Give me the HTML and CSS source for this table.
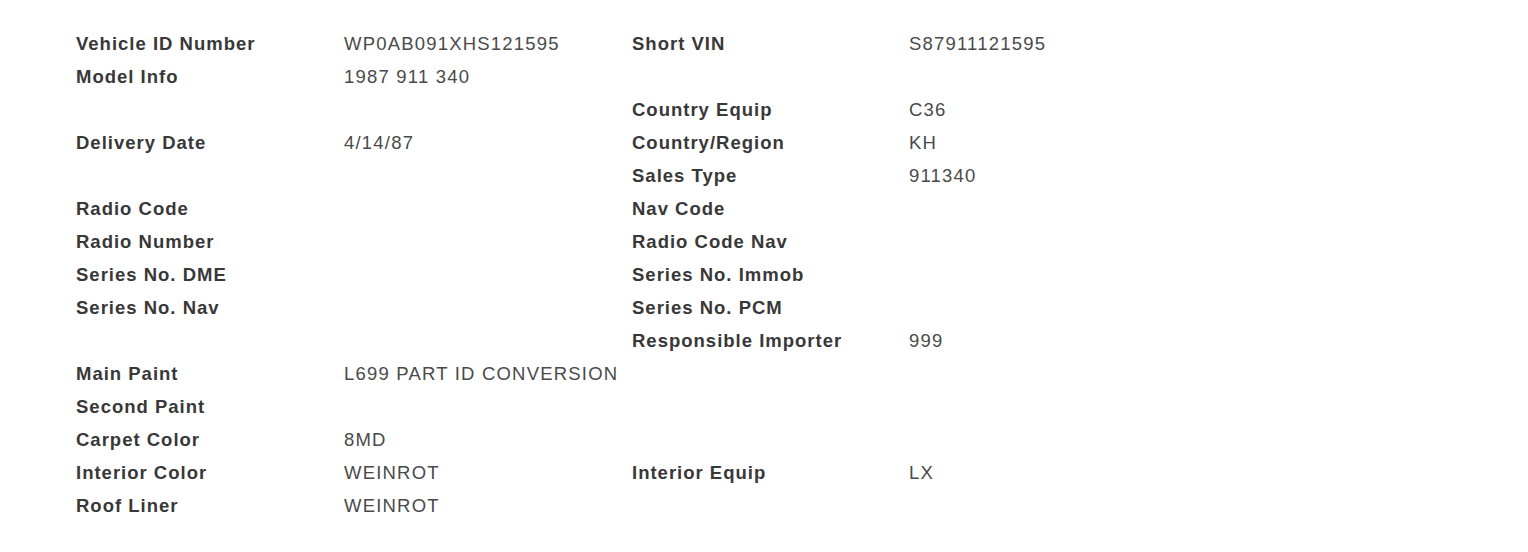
FILE: index.html
```html
<!DOCTYPE html>
<html lang="en">
<head>
    <meta charset="UTF-8">
    <title>Vehicle Data</title>
    <link rel="stylesheet" href="styles.css">
</head>
<body>
    <div class="vehicle-sheet">
        <span class="label">Vehicle ID Number</span><span class="value">WP0AB091XHS121595</span>
        <span class="label">Short VIN</span><span class="value">S87911121595</span>

        <span class="label">Model Info</span><span class="value">1987 911 340</span>
        <span class="label"></span><span class="value"></span>

        <span class="label"></span><span class="value"></span>
        <span class="label">Country Equip</span><span class="value">C36</span>

        <span class="label">Delivery Date</span><span class="value">4/14/87</span>
        <span class="label">Country/Region</span><span class="value">KH</span>

        <span class="label"></span><span class="value"></span>
        <span class="label">Sales Type</span><span class="value">911340</span>

        <span class="label">Radio Code</span><span class="value"></span>
        <span class="label">Nav Code</span><span class="value"></span>

        <span class="label">Radio Number</span><span class="value"></span>
        <span class="label">Radio Code Nav</span><span class="value"></span>

        <span class="label">Series No. DME</span><span class="value"></span>
        <span class="label">Series No. Immob</span><span class="value"></span>

        <span class="label">Series No. Nav</span><span class="value"></span>
        <span class="label">Series No. PCM</span><span class="value"></span>

        <span class="label"></span><span class="value"></span>
        <span class="label">Responsible Importer</span><span class="value">999</span>

        <span class="label">Main Paint</span><span class="value">L699 PART ID CONVERSION</span>
        <span class="label"></span><span class="value"></span>

        <span class="label">Second Paint</span><span class="value"></span>
        <span class="label"></span><span class="value"></span>

        <span class="label">Carpet Color</span><span class="value">8MD</span>
        <span class="label"></span><span class="value"></span>

        <span class="label">Interior Color</span><span class="value">WEINROT</span>
        <span class="label">Interior Equip</span><span class="value">LX</span>

        <span class="label">Roof Liner</span><span class="value">WEINROT</span>
        <span class="label"></span><span class="value"></span>
    </div>
</body>
</html>
```

FILE: styles.css
```css
body {
    margin: 0;
    background: #ffffff;
    font-family: 'Liberation Sans', Arial, sans-serif;
}

.vehicle-sheet {
    display: grid;
    grid-template-columns: 268px 288px 277px 200px;
    grid-auto-rows: 33px;
    padding: 27px 0 0 76px;
    font-size: 18.5px;
    line-height: 33px;
    white-space: nowrap;
}

.label {
    font-weight: bold;
    color: #383838;
    letter-spacing: 1px;
}

.value {
    color: #4a4a4a;
    letter-spacing: 1.2px;
}
```
